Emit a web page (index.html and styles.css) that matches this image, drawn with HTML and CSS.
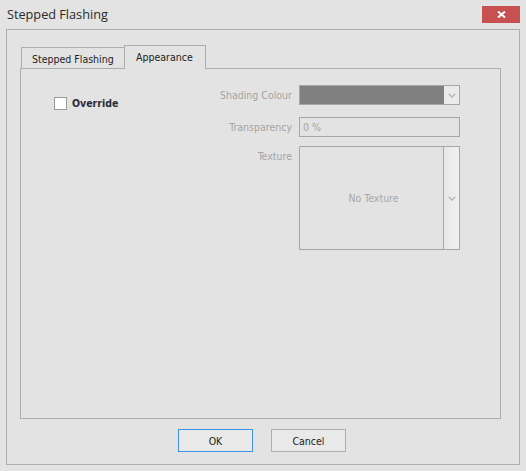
FILE: index.html
```html
<!DOCTYPE html>
<html>
<head>
<meta charset="utf-8">
<link rel="stylesheet" href="styles.css">
</head>
<body>
<div class="window">
  <div class="titlebar">
    <div class="title">Stepped Flashing</div>
    <div class="close">
      <svg width="9" height="7" viewBox="0 0 9 7"><path d="M1 0.5 L8 6.5 M8 0.5 L1 6.5" stroke="#fff" stroke-width="2" fill="none"/></svg>
    </div>
  </div>
  <div class="frame">
    <div class="tabs">
      <div class="tab">Stepped Flashing</div>
      <div class="tab active">Appearance</div>
    </div>
    <div class="panel">
      <div class="left">
        <label class="override"><span class="check"></span><span class="override-text">Override</span></label>
      </div>
      <div class="form">
        <div class="label">Shading Colour</div>
        <div class="combo">
          <div class="fill"></div>
          <div class="drop">
            <svg width="8" height="5" viewBox="0 0 8 5"><path d="M0.7 0.7 L4 4 L7.3 0.7" stroke="#b8b8b8" stroke-width="1.5" fill="none"/></svg>
          </div>
        </div>
        <div class="label r2">Transparency</div>
        <div class="field r2">0 %</div>
        <div class="label r3 top">Texture</div>
        <div class="texture r3">
          <div class="tex-main">No Texture</div>
          <div class="tex-drop">
            <svg width="8" height="5" viewBox="0 0 8 5"><path d="M0.7 0.7 L4 4 L7.3 0.7" stroke="#b8b8b8" stroke-width="1.5" fill="none"/></svg>
          </div>
        </div>
      </div>
    </div>
    <div class="buttons">
      <div class="btn default">OK</div>
      <div class="btn">Cancel</div>
    </div>
  </div>
</div>
</body>
</html>
```
FILE: styles.css
```css
html, body {
  margin: 0;
  padding: 0;
  background: #e3e3e3;
}
body {
  width: 526px;
  height: 471px;
  overflow: hidden;
  font-family: "DejaVu Sans Condensed", "DejaVu Sans", sans-serif;
  font-size: 10.5px;
  color: #222;
}
.titlebar {
  display: flex;
  justify-content: space-between;
  height: 29px;
}
.title {
  padding: 5px 0 0 7px;
  font-family: "Open Sans", "Noto Sans", sans-serif;
  font-size: 12.7px;
  line-height: 18px;
  color: #2a2a2a;
}
.close {
  width: 38px;
  height: 17px;
  margin: 6px 6px 0 0;
  background: #c75050;
  display: flex;
  align-items: center;
  justify-content: center;
}
.close svg { display: block; }
.frame {
  margin: 0 6px;
  height: 436px;
  box-sizing: border-box;
  border: 1px solid #adadad;
  padding: 15px 0 0 13px;
}
.tabs {
  display: flex;
  align-items: flex-end;
  height: 23px;
  padding-left: 1px;
}
.tab {
  box-sizing: border-box;
  height: 21px;
  width: 103px;
  border-top: 1px solid #adadad;
  border-left: 1px solid #adadad;
  padding: 4px 0 0 10px;
  line-height: 14px;
  color: #222;
  white-space: nowrap;
}
.tab.active {
  position: relative;
  z-index: 1;
  height: 24px;
  width: 82px;
  margin-bottom: -1px;
  border-right: 1px solid #adadad;
  background: #e3e3e3;
  padding-left: 11px;
}
.panel {
  box-sizing: border-box;
  width: 481px;
  height: 351px;
  border: 1px solid #adadad;
  padding-top: 16px;
  display: flex;
}
.left {
  width: 178px;
  padding: 12px 0 0 33px;
  box-sizing: border-box;
}
.override {
  display: flex;
  align-items: center;
}
.check {
  box-sizing: border-box;
  width: 13px;
  height: 13px;
  border: 1px solid #9a9a9a;
  background: #fff;
}
.override-text {
  margin-left: 5px;
  font-weight: bold;
  font-size: 10.5px;
  color: #2b2b38;
  line-height: 13px;
}
.form {
  display: grid;
  grid-template-columns: 93px 161px;
  column-gap: 7px;
  align-content: start;
}
.label {
  text-align: right;
  color: #a4a4a4;
  line-height: 20px;
  white-space: nowrap;
}
.label.top {
  line-height: 14px;
  padding-top: 3px;
}
.r2 { margin-top: 12px; }
.r3 { margin-top: 9px; }
.combo {
  box-sizing: border-box;
  height: 20px;
  border: 1px solid #a6a6a6;
  display: flex;
}
.fill {
  flex: 1;
  background: #808080;
}
.drop {
  width: 15px;
  background: #ebebeb;
  display: flex;
  align-items: center;
  justify-content: center;
}
.drop svg, .tex-drop svg { display: block; }
.field {
  box-sizing: border-box;
  height: 20px;
  border: 1px solid #a6a6a6;
  padding-left: 3px;
  line-height: 18px;
  color: #a4a4a4;
}
.texture {
  box-sizing: border-box;
  height: 104px;
  border: 1px solid #a6a6a6;
  display: flex;
}
.tex-main {
  flex: 1;
  display: flex;
  align-items: center;
  justify-content: center;
  padding-left: 4px;
  color: #a8a8a8;
}
.tex-drop {
  width: 15px;
  border-left: 1px solid #a6a6a6;
  background: linear-gradient(to right, #e8e8e8, #f0f0f0);
  display: flex;
  align-items: center;
  justify-content: center;
}
.buttons {
  display: flex;
  gap: 18px;
  margin-top: 10px;
  padding-left: 158px;
}
.btn {
  box-sizing: border-box;
  width: 75px;
  height: 23px;
  border: 1px solid #adadad;
  background: #e9e9e9;
  display: flex;
  align-items: center;
  justify-content: center;
  font-size: 10.5px;
  color: #222;
}
.btn.default {
  border-color: #3c92e8;
}
```
